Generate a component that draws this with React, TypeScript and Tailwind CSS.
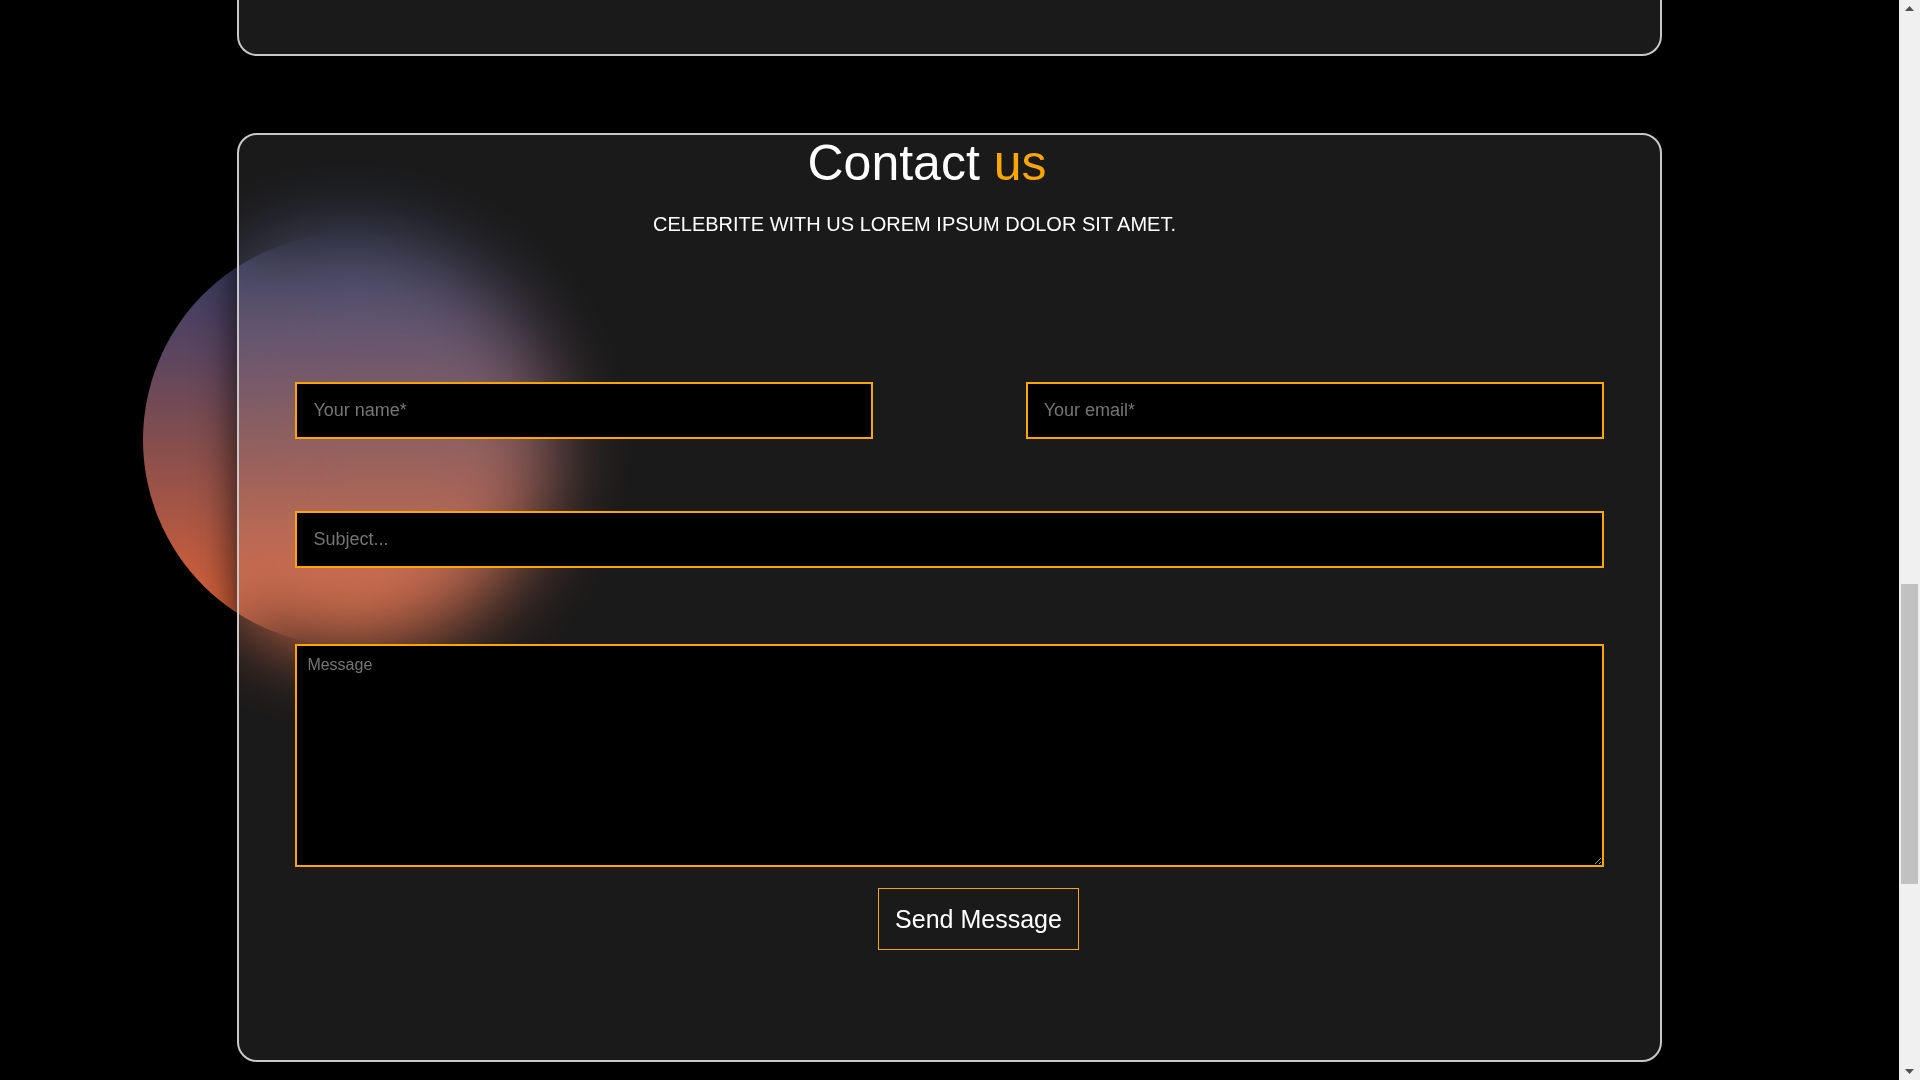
import React from "react";

export default function App() {
  return (
    <div className="flex h-[1080px] w-full overflow-hidden bg-black font-['Liberation_Sans',Arial,sans-serif] leading-[1.15]">
      <div className="relative flex-1 overflow-hidden">
        {/* decorative gradient orb behind the contact card */}
        <div className="absolute left-[143px] top-[234px] h-[412px] w-[412px] rounded-full bg-[linear-gradient(to_bottom,#2c3862_0%,#5a4560_28%,#874f4c_52%,#b95a40_76%,#ea6636_100%)]" />

        <div className="relative z-10 mx-auto w-[75%]">
          {/* bottom of previous card */}
          <div className="h-[56px] rounded-b-[20px] border-2 border-t-0 border-[#c8c8c8] bg-white/10" />

          {/* contact card */}
          <section className="mt-[77px] rounded-[20px] border-2 border-[#c8c8c8] bg-white/10 px-[56px] pb-[110px] shadow-[0_0_40px_rgba(0,0,0,0.8)] backdrop-blur-[40px]">
            <h2 className="pr-[45px] text-center text-[50px] font-normal leading-[1.15] text-white">
              Contact <span className="text-[#ffa500]">us</span>
            </h2>
            <p className="mt-5 pr-[70px] text-center text-[20px] leading-[1.15] text-white">
              CELEBRITE WITH US LOREM IPSUM DOLOR SIT AMET.
            </p>

            <form className="mt-[146px]" onSubmit={(e) => e.preventDefault()}>
              <div className="flex justify-between">
                <input
                  type="text"
                  placeholder="Your name*"
                  className="h-[57px] w-[578px] border-2 border-[#ffa500] bg-black px-4 text-[18px] text-white outline-none placeholder:text-[#757575]"
                />
                <input
                  type="email"
                  placeholder="Your email*"
                  className="h-[57px] w-[578px] border-2 border-[#ffa500] bg-black px-4 text-[18px] text-white outline-none placeholder:text-[#757575]"
                />
              </div>
              <input
                type="text"
                placeholder="Subject..."
                className="mt-[72px] block h-[57px] w-full border-2 border-[#ffa500] bg-black px-4 text-[18px] text-white outline-none placeholder:text-[#757575]"
              />
              <textarea
                placeholder="Message"
                className="mt-[76px] block h-[223px] w-full border-2 border-[#ffa500] bg-black p-[10px] text-[16px] leading-[1.15] text-white outline-none placeholder:text-[#757575]"
              />
              <div className="mt-[21px] flex justify-center pl-[58px]">
                <button
                  type="submit"
                  className="border border-[#ffa500] px-4 py-4 text-[25px] leading-[1.15] text-white"
                >
                  Send Message
                </button>
              </div>
            </form>
          </section>
        </div>
      </div>

      {/* scrollbar */}
      <div className="flex w-[21px] flex-col bg-[#f0f0f0]">
        <div className="flex h-[17px] items-center justify-center">
          <svg width="9" height="5" viewBox="0 0 9 5">
            <polygon points="4.5,0 9,5 0,5" fill="#505050" />
          </svg>
        </div>
        <div className="flex-1">
          <div className="mx-[2px] mt-[567px] h-[300px] bg-[#c1c1c1]" />
        </div>
        <div className="flex h-[17px] items-center justify-center">
          <svg width="9" height="5" viewBox="0 0 9 5">
            <polygon points="0,0 9,0 4.5,5" fill="#505050" />
          </svg>
        </div>
      </div>
    </div>
  );
}
